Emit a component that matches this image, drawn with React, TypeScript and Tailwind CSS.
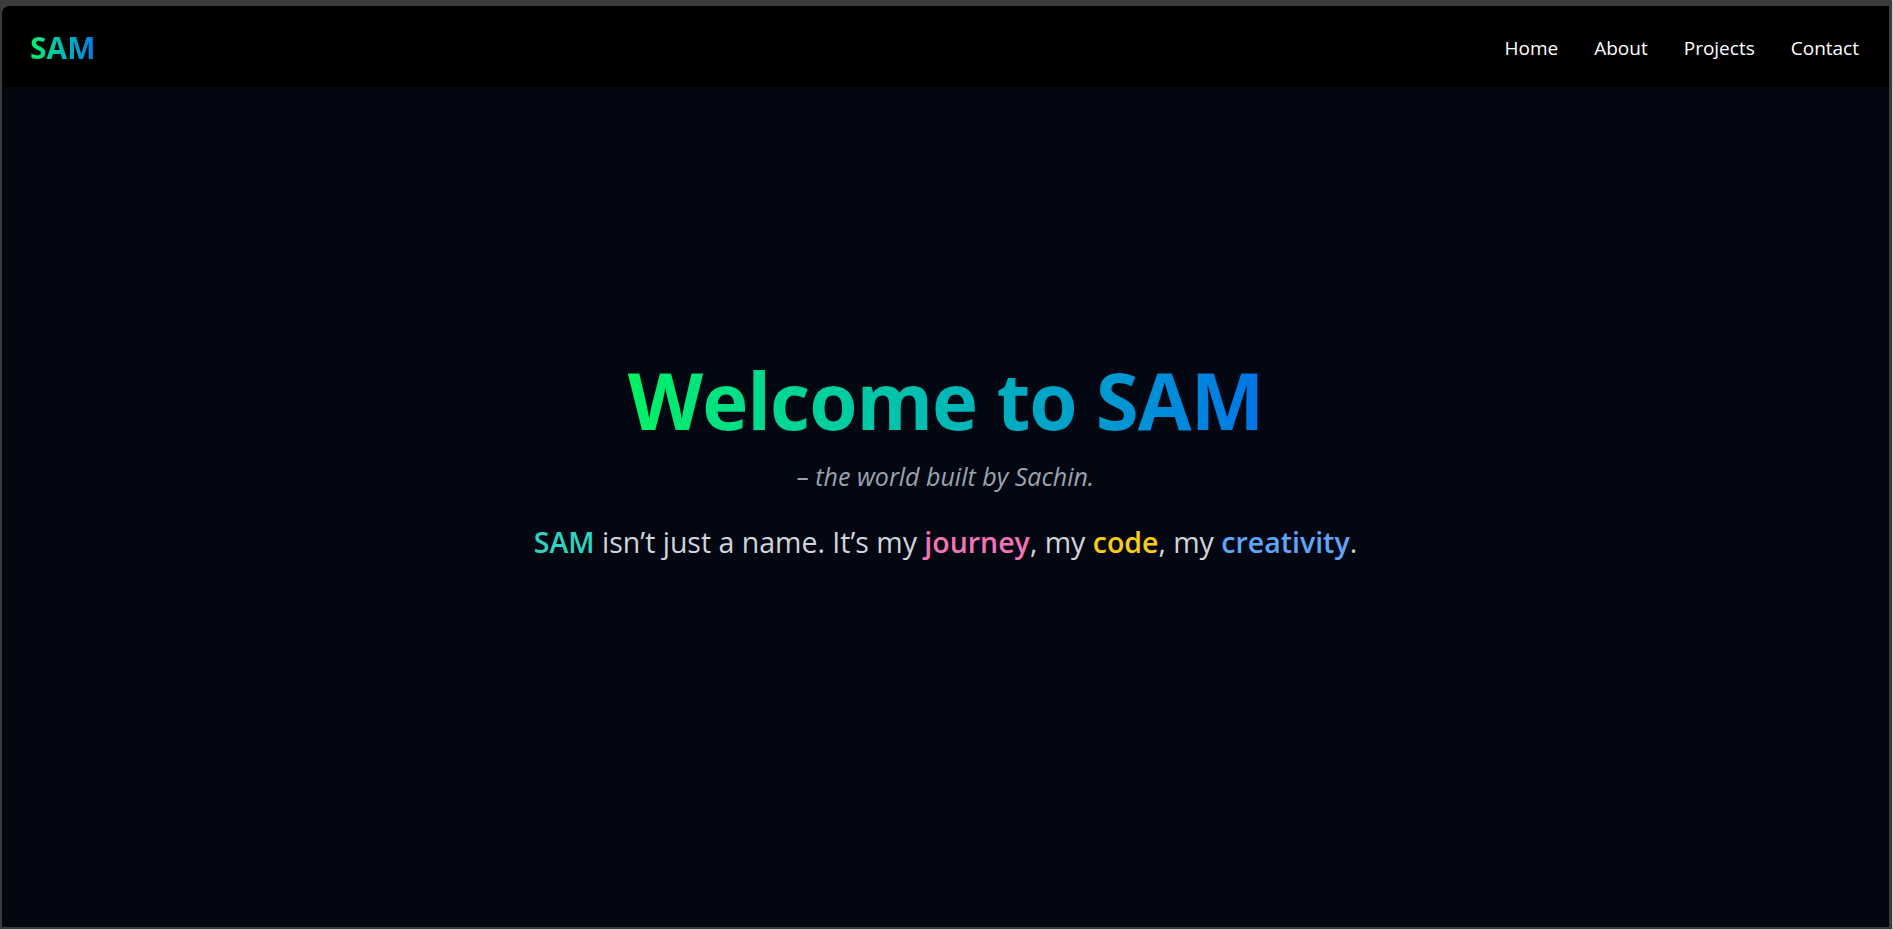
import React from "react";

const font = { fontFamily: '"Open Sans", "Noto Sans", sans-serif' };

export default function App() {
  return (
    <div
      className="w-full h-[930px] flex flex-col bg-[#3b3b3b] pt-[6px] pl-[2px] pr-[3px] pb-[2px] border-r border-b border-r-[#cfcfcf] border-b-[#cfcfcf]"
      style={font}
    >
      <div className="flex-1 flex flex-col rounded-tl-lg overflow-hidden bg-[#030712]">
        <nav className="h-[81px] shrink-0 bg-black flex items-center justify-between pl-[28px] pr-[30px] pt-[3px]">
          <div className="text-[30px] font-bold leading-none bg-gradient-to-r from-[#00f260] to-[#0575e6] bg-clip-text text-transparent">
            SAM
          </div>
          <ul className="flex items-center gap-[36px] text-[19px] text-white">
            <li>Home</li>
            <li>About</li>
            <li>Projects</li>
            <li>Contact</li>
          </ul>
        </nav>
        <main className="flex-1 flex flex-col items-center justify-center text-center pb-[91px]">
          <h1 className="text-[78px] font-bold leading-none tracking-[-1px] bg-gradient-to-r from-[#00f260] to-[#0575e6] bg-clip-text text-transparent">
            Welcome to SAM
          </h1>
          <p className="mt-[22px] text-[25px] leading-[1.2] italic text-[#9ca3af]">
            – the world built by Sachin.
          </p>
          <p className="mt-[33px] text-[28.5px] leading-[1.3] text-[#d1d5db]">
            <span className="font-semibold text-[#2dd4bf]">SAM</span> isn’t just a name. It’s my{" "}
            <span className="font-semibold text-[#f472b6]">journey</span>, my{" "}
            <span className="font-semibold text-[#facc15]">code</span>, my{" "}
            <span className="font-semibold text-[#60a5fa]">creativity</span>.
          </p>
        </main>
      </div>
    </div>
  );
}
